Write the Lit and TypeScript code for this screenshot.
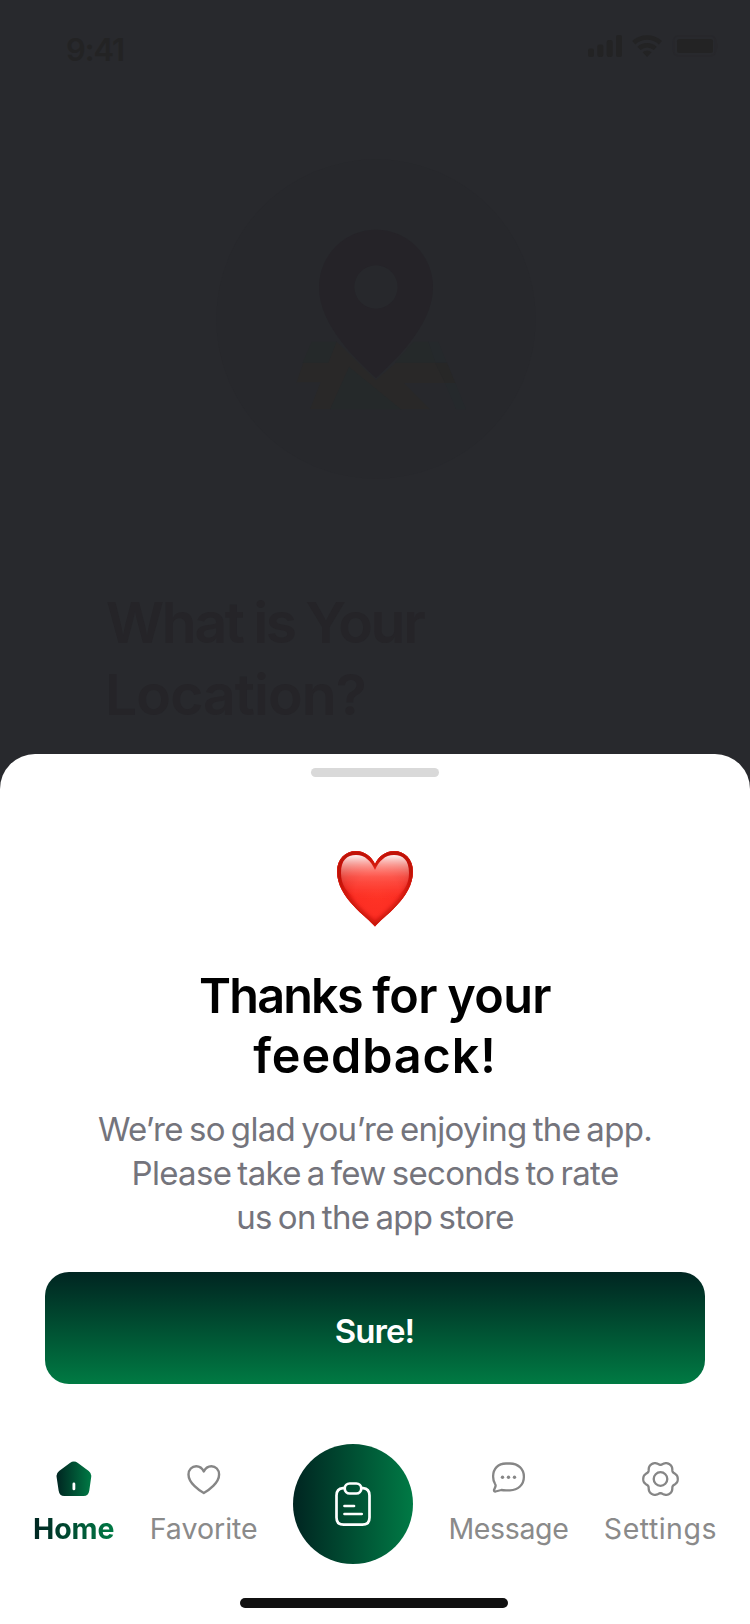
import { LitElement, html, css, svg } from "lit";
import { customElement, property } from "lit/decorators.js";

/** Six-lobed gear outline, traced as a closed polar curve. */
const gearPath = (() => {
  const pts: string[] = [];
  for (let i = 0; i < 120; i++) {
    const a = (i / 120) * Math.PI * 2;
    const r = 16 + 1.55 * Math.cos(6 * a) - 0.3 * Math.cos(12 * a);
    pts.push(`${(20 + r * Math.cos(a)).toFixed(2)} ${(18 + r * Math.sin(a)).toFixed(2)}`);
  }
  return `M${pts.join("L")}Z`;
})();

@customElement("status-bar")
export class StatusBar extends LitElement {
  static styles = css`
    :host {
      display: flex;
      justify-content: space-between;
      align-items: flex-start;
      padding: 32px 32px 0 66px;
      height: 129px;
      box-sizing: border-box;
      color: #232324;
    }
    .time {
      font-size: 31px;
      line-height: 36px;
      font-weight: 600;
      letter-spacing: -1.1px;
    }
    svg { display: block; margin-top: 2px; }
  `;
  render() {
    return html`
      <span class="time">9:41</span>
      <svg width="130" height="24" viewBox="588 34 130 24" fill="#232324">
        <rect x="588" y="48.5" width="6" height="8.5" rx="2" />
        <rect x="597.3" y="44.5" width="6" height="12.5" rx="2" />
        <rect x="606.7" y="40" width="6" height="17" rx="2" />
        <rect x="616" y="35" width="6" height="22" rx="2" />
        <g fill="none" stroke="#232324" stroke-width="4.6">
          <path d="M633.8 42.8a19.5 19.5 0 0 1 26.6 0" />
          <path d="M639 48.4a12 12 0 0 1 16.2 0" />
        </g>
        <path d="M642.6 52.2a6.6 6.6 0 0 1 9 0l-4.5 4.9z" />
        <rect x="673.5" y="35.8" width="42" height="20" rx="5" fill="none" stroke="#27272b" stroke-width="1.6" />
        <rect x="677" y="39" width="36" height="14" rx="2.5" />
        <path d="M717.3 43q1.6 3 0 6z" fill="#27272b" />
      </svg>
    `;
  }
}

@customElement("location-prompt")
export class LocationPrompt extends LitElement {
  static styles = css`
    :host { display: block; }
    .art { display: block; margin: 30px 0 0 216px; }
    h2 {
      margin: 108px 0 0 106px;
      font-size: 57px;
      line-height: 72px;
      font-weight: 600;
      color: #252428;
    }
    .a { display: block; letter-spacing: -2.3px; word-spacing: -1.5px; }
    .b { display: block; letter-spacing: -0.9px; margin-left: -1px; }
  `;
  render() {
    return html`
      <svg class="art" width="320" height="320" viewBox="48 27 960 960">
        <circle cx="528" cy="507" r="479" fill="#27282c" />
        <path fill="#25292a" d="M335 575H410L385 638H308ZM640 575H685L708 638H585ZM447 645 605 778H390Z" />
        <path fill="#25292c" d="M685 575H715L740 638H706ZM735 699H766L798 778H768Z" />
        <path fill="#292828" d="M410 575 528 690 588 638H706L735 699H612L690 778H603L447 650 390 778H330L362 697H290L310 638H385Z" />
        <path fill="#272727" d="M706 638H741L766 699H735Z" />
        <path fill="#252328" fill-rule="evenodd"
          d="M528 684C480 640 357 530 357 412A171 173 0 0 1 699 412C699 530 576 640 528 684ZM463 411a65 65 0 1 0 130 0a65 65 0 1 0-130 0Z" />
      </svg>
      <h2><span class="a">What is Your</span><span class="b">Location?</span></h2>
    `;
  }
}

@customElement("heart-emoji")
export class HeartEmoji extends LitElement {
  static styles = css`
    :host { display: block; width: 76px; height: 76px; }
    svg { display: block; }
  `;
  render() {
    const shape = "M38 75.5C31 66.5 0 47 0 20.5C0 8 8.5 0 19 0C27.500 0 34.500 5.500 38 13C41.500 5.500 48.500 0 57 0C67.500 0 76 8 76 20.5C76 47 45 66.500 38 75.500Z";
    return html`
      <svg width="76" height="76" viewBox="0 0 76 76">
        <defs>
          <radialGradient id="body" gradientUnits="userSpaceOnUse" cx="40" cy="42" r="40">
            <stop offset="0" stop-color="#ff3426" />
            <stop offset=".55" stop-color="#fc2e23" />
            <stop offset=".8" stop-color="#ec2016" />
            <stop offset="1" stop-color="#cf170d" />
          </radialGradient>
          <linearGradient id="shine" x1="0" y1="0" x2="0" y2="1">
            <stop offset="0" stop-color="#fff" stop-opacity=".95" />
            <stop offset=".22" stop-color="#ffc4be" stop-opacity=".75" />
            <stop offset=".5" stop-color="#ff7d73" stop-opacity=".5" />
            <stop offset="1" stop-color="#ff4a3e" stop-opacity="0" />
          </linearGradient>
          <clipPath id="clip"><path d=${shape} /></clipPath>
          <filter id="soft" x="-20%" y="-20%" width="140%" height="140%"><feGaussianBlur stdDeviation="2" /></filter>
          <filter id="edge" x="-10%" y="-10%" width="120%" height="120%"><feGaussianBlur stdDeviation=".6" /></filter>
        </defs>
        <path d=${shape} fill="url(#body)" />
        <g clip-path="url(#clip)">
          <path d=${shape} fill="none" stroke="#a80d06" stroke-width="5" opacity=".7" filter="url(#soft)" />
          <path d=${shape} fill="none" stroke="#d8180e" stroke-width="1.500" />
          <path filter="url(#edge)" fill="url(#shine)"
            d="M4 22C4 9 10 4 19 4C28 4 34 10 38 19C42 10 48 4 57 4C66 4 72 9 72 22C72 34 66 42 58 46C48 49 28 49 18 46C10 42 4 34 4 22Z" />
        </g>
      </svg>
    `;
  }
}

const icons = {
  home: svg`
    <svg width="36" height="36" viewBox="-.5 -.5 36 36">
      <defs><linearGradient id="g"><stop offset="0" stop-color="#002521" /><stop offset="1" stop-color="#007a45" /></linearGradient></defs>
      <path fill="url(#g)" d="M13.400 1.500Q17.400-1.400 21.400 1.500L32.200 9.400Q35.300 11.800 34.700 15.500L32.800 29Q32 34.500 27 34.500H7.800Q2.900 34.500 2.100 29L.1 15.500Q-.5 11.800 2.600 9.400Z" />
      <path d="M17.400 22.400v5" stroke="#fff" stroke-width="2.800" stroke-linecap="round" />
    </svg>`,
  favorite: svg`
    <svg width="34" height="36" viewBox="0 -3.500 34 36" fill="none" stroke="#868686" stroke-width="2.400" stroke-linejoin="round">
      <path d="M16.800 28.500C12 25.800 1.500 18.500 1.500 10C1.500 5 5 1.700 9.200 1.700C12.800 1.700 15.400 3.900 16.800 7C18.200 3.900 20.800 1.700 24.400 1.700C28.600 1.700 32.100 5 32.100 10C32.100 18.500 21.600 25.800 16.800 28.500Z" />
    </svg>`,
  message: svg`
    <svg width="35" height="36" viewBox="0.500 .5 35 36" fill="none" stroke="#868686" stroke-width="2.300" stroke-linejoin="round">
      <path d="M15.500 3H19.500C27.500 3 33.400 8.400 33.400 16.200C33.400 24.200 27.500 29.800 19.500 29.800H15.500Q13 29.700 10.800 29.500L5 31Q3.300 31.200 3.500 29.500L4.900 26.300Q5.500 24.700 4.500 23.300Q2.600 20 2.600 16C2.600 8.400 7.500 3 15.500 3Z" />
      <g fill="#868686" stroke="none"><circle cx="12" cy="16.800" r="1.700" /><circle cx="18" cy="16.800" r="1.700" /><circle cx="24" cy="16.800" r="1.700" /></g>
    </svg>`,
  settings: svg`
    <svg width="40" height="36" viewBox="-.5 0 40 36" fill="none" stroke="#868686" stroke-width="2.300" stroke-linejoin="round">
      <path d=${gearPath} />
      <circle cx="20" cy="18" r="6.800" />
    </svg>`,
};

@customElement("nav-item")
export class NavItem extends LitElement {
  @property() icon: keyof typeof icons = "home";
  @property() label = "";
  static styles = css`
    :host {
      display: flex;
      flex-direction: column;
      align-items: center;
      gap: 14px;
      font-size: 28.5px;
      line-height: 36px;
      color: #8a8a8a;
    }
    svg { display: block; }
    .home {
      font-weight: 700;
      letter-spacing: -0.1px;
      background: linear-gradient(90deg, #002521, #007a45);
      -webkit-background-clip: text;
      background-clip: text;
      color: transparent;
    }
    .settings { letter-spacing: 0.5px; }
    .message { letter-spacing: -0.35px; }
  `;
  render() {
    return html`${icons[this.icon]}<span class=${this.icon}>${this.label}</span>`;
  }
}

@customElement("app-root")
export class AppRoot extends LitElement {
  static styles = css`
    :host {
      display: flex;
      flex-direction: column;
      width: 750px;
      height: 1624px;
      overflow: hidden;
      background: #28292d;
      font-family: Inter, "Liberation Sans", sans-serif;
    }
    .behind { flex: 0 0 754px; }
    .sheet {
      flex: 1;
      display: flex;
      flex-direction: column;
      align-items: center;
      background: #fff;
      border-radius: 35px 35px 0 0;
    }
    .grip {
      width: 128px;
      height: 9px;
      margin-top: 14px;
      border-radius: 4.5px;
      background: #d9d9d9;
    }
    heart-emoji { margin-top: 74px; }
    h1 {
      margin: 39px 0 0;
      font-size: 48.5px;
      line-height: 60px;
      font-weight: 600;
      color: #000;
      text-align: center;
    }
    h1 span { display: block; }
    .l1 { letter-spacing: -0.6px; word-spacing: -1.2px; }
    .l1 b { font-weight: 600; letter-spacing: -1.8px; }
    .l2 { letter-spacing: 0.9px; }
    p {
      margin: 21px 0 0;
      font-size: 33px;
      line-height: 44px;
      letter-spacing: -0.68px;
      word-spacing: -2.5px;
      color: #74747c;
      text-align: center;
    }
    button {
      width: 660px;
      height: 112px;
      margin-top: 33px;
      padding: 5px 1px 0 0;
      border: 0;
      border-radius: 24px;
      background: linear-gradient(#002521, #007a43);
      color: #fff;
      font: 600 33px Inter, "Liberation Sans", sans-serif;
      letter-spacing: -0.9px;
    }
    nav {
      align-self: stretch;
      display: flex;
      justify-content: space-between;
      align-items: flex-start;
      margin-top: 60px;
      padding: 0 33px;
    }
    nav-item { margin-top: 17px; }
    .action {
      display: grid;
      place-items: center;
      width: 120px;
      height: 120px;
      border-radius: 50%;
      background: linear-gradient(90deg, #002521, #007a45);
    }
    .indicator {
      width: 268px;
      height: 10px;
      margin: 34px 2px 0 0;
      border-radius: 5px;
      background: #101010;
    }
  `;
  render() {
    return html`
      <div class="behind">
        <status-bar></status-bar>
        <location-prompt></location-prompt>
      </div>
      <section class="sheet">
        <div class="grip"></div>
        <heart-emoji></heart-emoji>
        <h1><span class="l1"><b>Thanks</b> for your</span><span class="l2">feedback!</span></h1>
        <p>We’re so glad you’re enjoying the app.<br />Please take a few seconds to rate<br />us on the app store</p>
        <button>Sure!</button>
        <nav>
          <nav-item icon="home" label="Home"></nav-item>
          <nav-item icon="favorite" label="Favorite"></nav-item>
          <div class="action">
            <svg width="40" height="48" viewBox="0 0 40 48" fill="none" stroke="#fff" stroke-width="2.700" stroke-linecap="round">
              <path d="M11.500 8.200H10Q3.500 8.800 3.500 15.500V37.500Q3.500 44.700 10.700 44.700H29.300Q36.500 44.700 36.500 37.500V15.500Q36.500 8.800 30 8.200H28.500" />
              <rect x="11.700" y="3.500" width="16.600" height="10" rx="5" />
              <path d="M11.500 26H21M11.500 34H28.700" />
            </svg>
          </div>
          <nav-item icon="message" label="Message"></nav-item>
          <nav-item icon="settings" label="Settings"></nav-item>
        </nav>
        <div class="indicator"></div>
      </section>
    `;
  }
}
